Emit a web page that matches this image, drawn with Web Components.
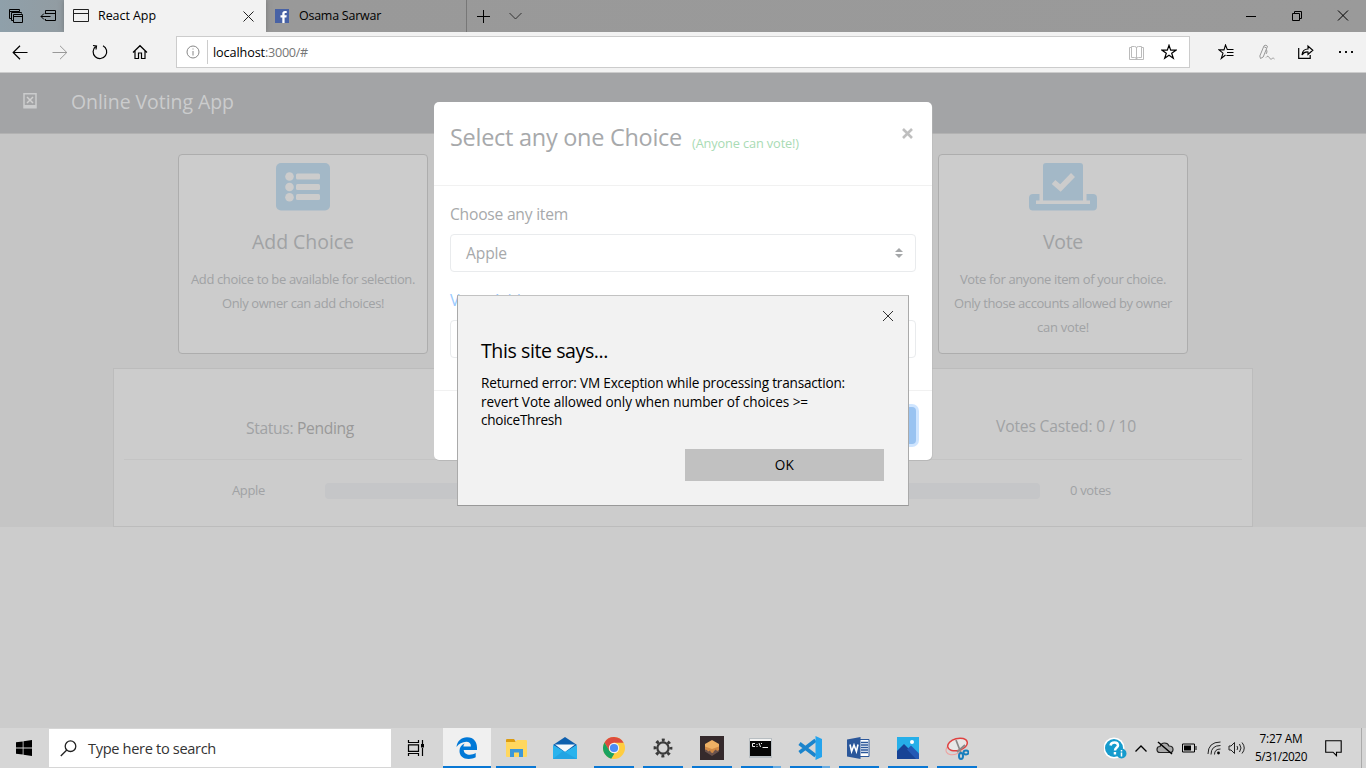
<!DOCTYPE html>
<html lang="en"><head><meta charset="utf-8"><title>React App</title>
<style>html,body{margin:0;height:768px;overflow:hidden;background:#ccc}body{font-family:"Open Sans","Noto Sans",sans-serif;color:#000}</style></head>
<body><desktop-screen></desktop-screen>
<script>
function define(name, css, html){
  const t=document.createElement('template');
  t.innerHTML='<style>*{box-sizing:border-box}svg{display:block;flex:none}'+css+'</style>'+html;
  customElements.define(name,class extends HTMLElement{
    constructor(){super();this.attachShadow({mode:'open'}).append(t.content.cloneNode(true));}
  });
}
define('desktop-screen',`:host{display:grid;grid-template-rows:32px 41px 655px 40px;width:1366px;height:768px}`,
`<title-bar></title-bar><tool-bar></tool-bar><web-page></web-page><task-bar></task-bar>`);

define('title-bar',`:host{display:flex;height:32px;background:linear-gradient(90deg,#8fa0aa 0,#929ca2 60px,#999 270px,#9a9a9a)}
.cell{width:32px;display:grid;place-items:center}.tab{display:flex;align-items:center;height:32px}
.on{width:202px;background:#f2f2f2;box-shadow:0 0 5px #5558;padding:0 12px 0 9px}.off{width:201px;border-right:1px solid #777;padding-left:9px}
.on ui-text{margin-left:9px}.on svg:last-child{margin-left:auto}.off ui-text{margin-left:10px}.win{width:46px}.sp{flex:1}`,
`<div class="cell"><svg width="14" height="14" fill="none" stroke="#000"><path d="M2.500 9.500h-2v-9h10v2M.5 2.500h10M4.500 11.500h-2v-8h10v1M4.500 5.500h9v8h-9zM4.500 7.500h9"/></svg></div>
<div class="cell"><svg width="18" height="14" fill="none" stroke="#000"><path d="M6.500 5v-3.500h10v10h-10V10M6.500 4.500h10M2 7.500h9.500M5 4.500l-3 3 3 3"/></svg></div>
<div class="tab on"><svg width="16" height="14" fill="none" stroke="#222"><path d="M.5.500h15v12H.5zM.5 4.500h15"/></svg><ui-text w="58" s="12.1">React App</ui-text><svg width="11" height="11" stroke="#222"><path d="M.5.500l10 10M10.500.500l-10 10"/></svg></div>
<div class="tab off"><svg width="14" height="14"><path fill="#4862a5" d="M0 0h14v14H0z"/><path fill="#fff" d="M7.300 14V8.500H5.500V6.200h1.800V4.500C7.300 2.700 8.300 1.900 10 1.900h1.700v2.200h-1.200c-.7 0-.9.300-.9.900v1.200h2.100l-.3 2.300H9.600V14z"/></svg><ui-text w="82" s="12.100">Osama Sarwar</ui-text></div>
<div class="cell"><svg width="14" height="14" stroke="#000"><path d="M7.500 1v13M1 7.500h13"/></svg></div>
<div class="cell"><svg width="14" height="8" fill="none" stroke="#333"><path d="M1.500 1l6 6 6-6"/></svg></div>
<div class="sp"></div>
<div class="cell win"><svg width="10" height="10" stroke="#000"><path d="M0 5.500h10"/></svg></div>
<div class="cell win"><svg width="10" height="10" fill="none" stroke="#000"><path d="M2.500 2V.500h7v7H8M.5 2.500h7v7h-7z"/></svg></div>
<div class="cell win"><svg width="12" height="12" stroke="#000"><path d="M1 .5l10 10M11 .5l-10 10"/></svg></div>`);

define('tool-bar',`:host{display:flex;height:41px;background:#f2f2f2;border-bottom:1px solid #ccc}
.c{width:40px;height:40px;display:grid;place-items:center}.bar{margin:4px 16px 4px 16px;width:1014px;height:32px;border:1px solid #ccc;background:#fff;display:flex;align-items:center;padding-left:9px}
.bar .c{width:33px;height:30px}.bar ui-text{margin-top:-1px}i{width:1px;height:24px;background:#ccc;margin:0 5px 0 7px}.g{color:#767676}.sp{flex:1}`,
`<div class="c"><svg width="16" height="15" fill="none" stroke="#000" stroke-width="1.200"><path d="M15.500 7.500H1M8 .8L1.200 7.500 8 14.200"/></svg></div>
<div class="c"><svg width="16" height="15" fill="none" stroke="#999"><path d="M.5 7.500H15M8 .8l6.800 6.700L8 14.200"/></svg></div>
<div class="c"><svg width="16" height="16" fill="none" stroke="#000" stroke-width="1.200"><path d="M3.600 2.500A6.800 6.800 0 1 0 11 1.700M1 1.500l3.500.5-.5 3.500"/></svg></div>
<div class="c"><svg width="16" height="16" fill="none" stroke="#000" stroke-width="1.200"><path d="M1 8.500l7-6.800 7 6.800M3 7v7.500h3.500V9h3v5.500H13V7"/></svg></div>
<div class="bar"><svg width="14" height="14" fill="none" stroke="#888"><circle cx="7" cy="7" r="6"/><path d="M7 6v4.500M7 3.500v1"/></svg><i></i><ui-text w="52" s="12.300">localhost</ui-text><ui-text class="g" w="43" s="12.300">:3000/#</ui-text><div class="sp"></div>
<div class="c"><svg width="16" height="15" fill="none" stroke="#bbb"><path d="M3.500 12.500v-11h3q2 0 2 1.500 0-1.500 2-1.500h3v11h-3q-2 0-2 1.500 0-1.500-2-1.500zM8.500 2v12M3 2.500H1.500v12h14v-12H14"/></svg></div>
<div class="c"><svg width="16" height="16" fill="none" stroke="#000" stroke-width="1.200"><path d="M8 1.300l1.700 4.900h5.200l-4.200 3.100 1.600 5-4.300-3.100-4.300 3.100 1.600-5L1.100 6.200h5.200z"/></svg></div><div style="width:4px"></div></div>
<div class="c"><svg width="16" height="16" fill="none" stroke="#000" stroke-width="1.100"><path d="M15.500 5.500H9.300L7.500 1 6 5.900H1l4 3.300-1.700 5.200L7.500 11M9 8.500h6.500M8.500 11.500h7"/></svg></div>
<div class="c"><svg width="17" height="17" fill="none" stroke="#999"><path d="M2.500 14.500L1.800 12 6 1.800q2-1.500 3.500.5L5.200 13zM6.300 3l2 .8M8 13.500c3-4 3.500 3 5.500 1.500s1.500-1 3 0M8.500 5.500L9 8l-1 2"/></svg></div>
<div class="c"><svg width="18" height="16" fill="none" stroke="#000" stroke-width="1.200"><path d="M1.700 4v10.400h11.500V11M5 11q.5-6 6-6V2l4.800 4.300L11 10.500V8q-4-.3-6 3z"/></svg></div>
<div class="c"><svg width="16" height="4" fill="#111"><path d="M1 1h2v2H1zM7 1h2v2H7zM13 1h2v2h-2z"/></svg></div>`);

define('web-page',`:host{display:block;position:relative;height:655px;background:#ccc;color:#a0a2a4;overflow:hidden}
header{height:61px;background:#a3a4a6;border-bottom:1px solid #b2b2b2;display:flex;align-items:center;padding-left:23px;color:#cbcccd}
header ui-text{margin-left:34px;margin-top:-2px}header svg{margin-top:-4px}
main{height:393px;background:#c5c5c5;padding:20px 113px 0}.cards{display:flex;justify-content:space-between;padding:0 65px}
.panel{margin-top:14px;height:159px;background:#ccc;border:1px solid #bcbcbc;padding:0 10px}
.top{height:91px;border-bottom:1px solid #c4c4c4;display:flex;justify-content:space-between;padding:47px 106px 0 122px}.top ui-text:last-child{margin-top:-2px}
.row{display:flex;align-items:center;height:61px;padding-left:108px}.row ui-text{margin-top:-2px}.bar{width:715px;height:16px;border-radius:4px;background:#c5c6c8;margin:0 30px 0 60px}
vote-modal{position:absolute;left:434px;top:29px}site-alert{position:absolute;left:457px;top:222px}`,
`<header><svg width="14" height="16"><path fill="#a3a4a6" stroke="#cbcccd" stroke-width="1.500" d="M1 .8h12v14H1z"/><path fill="#cbcccd" d="M1 12h12v3H1z"/><path d="M4 4l6 6M10 4l-6 6" stroke="#d0d0d0" stroke-width="1.500"/></svg><ui-text w="163" s="18.900" l="30">Online Voting App</ui-text></header>
<main><div class="cards">
<choice-card><svg slot="icon" width="54" height="48"><rect width="54" height="47.500" rx="5" fill="#a3b8c7"/><g fill="#ccc"><circle cx="13.500" cy="13.500" r="4.300"/><circle cx="13.500" cy="24" r="4.300"/><circle cx="13.500" cy="34.200" r="4.300"/><rect x="20" y="10.500" width="24" height="6" rx="1.500"/><rect x="20" y="21" width="24" height="6" rx="1.500"/><rect x="20" y="31" width="24" height="6" rx="1.500"/></g></svg>
<ui-text slot="title" w="102" s="18.900" l="24">Add Choice</ui-text><ui-text w="224" s="12.600" l="24">Add choice to be available for selection.</ui-text><ui-text w="162" s="12.600" l="24">Only owner can add choices!</ui-text></choice-card>
<choice-card><svg slot="icon" width="68" height="48"><g fill="#a3b8c7"><path d="M17 0h34q3 0 3 3v34.500H14V3q0-3 3-3z"/><path d="M4 31h6.500v6.500H7v3.500h54v-3.500h-3.500V31H64q4 0 4 4v8.500q0 4-4 4H4q-4 0-4-4V35q0-4 4-4z"/></g><path d="M24.500 19l7 6L44 12" fill="none" stroke="#ccc" stroke-width="5.500"/></svg>
<ui-text slot="title" w="40" s="18.900" l="24">Vote</ui-text><ui-text w="206" s="12.600" l="24">Vote for anyone item of your choice.</ui-text><ui-text w="218" s="12.600" l="24">Only those accounts allowed by owner</ui-text><ui-text w="52" s="12.600" l="24">can vote!</ui-text></choice-card></div>
<div class="panel"><div class="top"><ui-text w="108" s="15.200" l="24">Status: <span style="color:#999">Pending</span></ui-text><ui-text w="140" s="15.200" l="24">Votes Casted: 0 / 10</ui-text></div>
<div class="row"><ui-text w="33" s="12.600" l="20">Apple</ui-text><div class="bar"></div><ui-text w="41" s="12.600" l="20">0 votes</ui-text></div></div></main>
<vote-modal></vote-modal><site-alert></site-alert>`);

define('choice-card',`:host{width:250px;height:200px;border:1px solid #adadad;border-radius:4px;background:#ccc;display:flex;flex-direction:column;align-items:center;padding-top:8px;box-sizing:border-box}
.t{margin:19px 0 13px;height:24px}`,`<slot name="icon"></slot><div class="t"><slot name="title"></slot></div><slot></slot>`);

define('vote-modal',`:host{display:flex;flex-direction:column;box-sizing:border-box;width:498px;height:358px;background:#fff;border-radius:5px;box-shadow:.5px 1px 0 0 #b8b8b8;color:#a7a9ab}
.h{height:84px;border-bottom:1px solid #f1f1f1;display:flex;padding:19px 19px 0 16px}.g{color:#a9dbb4;margin:11px 0 0 10px}.h svg{margin:7px 0 0 auto}
.b{height:205px;border-bottom:1px solid #f1f1f1;padding:16px 16px 0}.f{border:1px solid #e9ebed;border-radius:4px;height:38px;display:flex;align-items:center;justify-content:space-between;padding:0 12px 0 15px;margin-top:8px}
.v{margin-top:16px;color:#99caff;display:block}.v ui-text{display:block}.foot{display:flex;justify-content:flex-end;padding:16px 16px 0}.btn{width:66px;height:37px;border-radius:4px;background:#99c3f1;box-shadow:0 0 0 3px #cfe5ff}`,
`<div class="h"><ui-text w="232" s="22.800" l="32">Select any one Choice</ui-text><ui-text class="g" w="107" s="12.400" l="22">(Anyone can vote!)</ui-text><svg width="11" height="11" stroke="#bfbfbf" stroke-width="2.600"><path d="M1 1l9 9M10 1l-9 9"/></svg></div>
<div class="b"><ui-text w="118" s="15.200" l="24">Choose any item</ui-text><div class="f"><ui-text w="41" s="15.200" l="24">Apple</ui-text><svg width="8" height="10" fill="#a5a7a9"><path d="M0 4l4-4 4 4zM0 6h8l-4 4z"/></svg></div>
<div class="v"><ui-text w="100" s="15.200" l="24">Voter Address</ui-text></div><div class="f"></div></div>
<div class="foot"><div class="btn"></div></div>`);

define('site-alert',`:host{display:flex;flex-direction:column;box-sizing:border-box;width:452px;height:211px;background:#f2f2f2;border:1px solid #aaa;border-top-color:#c2c2c2;border-bottom-color:#999;color:#000;padding:15px 24px 24px 23px}
.x{align-self:flex-end;margin-right:-10px}.t{margin:15px 0 9px 0;height:28px}.m{display:flex;flex-direction:column;align-items:flex-start;height:56px}
.ok{align-self:flex-end;margin-top:19px;width:199px;height:32px;background:#c1c1c1;display:grid;place-items:center;flex:none}`,
`<svg class="x" width="11" height="11" stroke="#333"><path d="M0 0l10 10M10 0l-10 10"/></svg><div class="t"><ui-text w="127" s="19" l="28">This site says...</ui-text></div>
<div class="m"><ui-text w="364" s="13.200" l="18.500">Returned error: VM Exception while processing transaction:</ui-text><ui-text w="327" s="13.200" l="18.500">revert Vote allowed only when number of choices &gt;=</ui-text><ui-text w="81" s="13.200" l="18.500">choiceThresh</ui-text></div>
<div class="ok"><ui-text w="19.500" s="13.200" l="20">OK</ui-text></div>`);

define('task-bar',`:host{display:flex;height:40px;background:#d6d6d6;box-sizing:border-box}
.s{width:49px;display:grid;place-items:center}.q{width:342px;height:38px;margin-top:1px;background:#fff;display:flex;align-items:center;padding-left:11px;color:#333;margin-right:2px}.q ui-text{margin:0 0 0 11px}
.tv{width:45px;margin-right:5px}.sp{flex:1}.tray{display:flex}.c{display:grid;place-items:center;width:24px}.time{display:flex;flex-direction:column;align-items:center;width:54px;margin-left:5.5px;padding-top:1px}
.end{width:5px;border-left:1px solid #aaa}`,
`<div class="s"><svg width="17" height="16" fill="#000"><path d="M0 2.300L6.700 1.400v6.200H0zM7.500 1.300L16 0v7.600H7.500zM0 8.400h6.700v6.200L0 13.700zM7.500 8.400H16V16l-8.500-1.300z"/></svg></div>
<div class="q"><svg width="17" height="17" fill="none" stroke="#222" stroke-width="1.300"><circle cx="10.500" cy="6.200" r="5.300"/><path d="M6.800 10L.8 16"/></svg><ui-text w="128" s="14.200" l="22">Type here to search</ui-text></div>
<div class="s tv"><svg width="17" height="16" fill="none" stroke="#000" stroke-width="1.200"><path d="M1.500 0v2.500h10V0M1.500 4.800h10v6.500h-10zM1.500 16v-2.500h10V16M15.500 0v4M15.500 8v8"/><path fill="#000" stroke="none" d="M14 4h3v3.500h-3z"/></svg></div>
<app-button active><svg width="22" height="22" viewBox="0 0 22 22"><path fill="#0078d7" d="M.5 10C1 4 5.500.2 11 .2c7 0 10 5 10 10.300V13H7.700c.1 3.200 3 4.800 6 4.800 2.200 0 4.300-.6 6-1.700v4.200c-2 1.100-4.500 1.600-7 1.600-5.700 0-9.200-3.200-9.200-8C3.500 10.500 5.300 7.700 8.600 6.400c-.8 1-1.100 2-1.200 3h7.500c0-3-1.600-4.600-4.600-4.600C6.500 4.800 2.700 7 .5 10z"/></svg></app-button>
<app-button><svg width="22" height="20"><path fill="#dc9c10" d="M1 2q0-1 1-1h7l2 3H1z"/><path fill="#ffd75e" d="M1 4l9 0 2-2h9q1 0 1 1v15q0 1-1 1H2q-1 0-1-1z"/><path fill="#3c98d9" d="M5 11h13v8h-4v-4.500H9V19H5z"/></svg></app-button>
<app-button none><svg width="24" height="22"><path fill="#0d5fae" d="M0 8L12 0l12 8-12 8z"/><path fill="#f5f8fb" d="M2 7.500h20L12 15z"/><path fill="#29b3ed" d="M0 8l12 7 12-7v14H0z"/><path fill="#1e96d9" d="M10 14l14 8H0z" opacity=".5"/></svg></app-button>
<app-button><svg width="22" height="22"><circle cx="11" cy="11" r="11" fill="#ffcd40"/><path fill="#dd4b3e" d="M1.500 5.500A11 11 0 0 1 20.600 5.800H11L6 13.500z"/><path fill="#1aa260" d="M1.500 5.500L6.500 14l5 2.500-3.300 5.200A11 11 0 0 1 1.500 5.500z"/><circle cx="11" cy="11" r="5.200" fill="#f4f4f4"/><circle cx="11" cy="11" r="4.100" fill="#4c8bf5"/></svg></app-button>
<app-button><svg width="20" height="20" fill="none" stroke="#3b3b3b"><circle cx="10" cy="10" r="5.600" stroke-width="2.200"/><circle cx="10" cy="10" r="7.900" stroke-width="3" stroke-dasharray="2.900 3.300" stroke-dashoffset="1.400"/></svg></app-button>
<app-button><svg width="24" height="24"><path fill="#352a2c" d="M0 0h24v24H0z"/><path fill="#6b524c" d="M5 12l7 3 7-3v3.500L12 20l-7-4.500z"/><path fill="#d28a45" d="M5 8h14v6l-2 1-1-1.500-2 1.500-1 2-2-.500-1-2-2 1-1-1.500-2-.500z"/><path fill="#eeb064" d="M12 4l7 4v2.500L12 13l-7-2.500V8z"/></svg></app-button>
<app-button multi><svg width="24" height="20"><path fill="#b8bec2" d="M0 0h23v20H0z"/><path fill="#f2f2f2" d="M1 1h21v2H1z"/><path fill="#050505" d="M1 3h21v15H1z"/><path fill="none" stroke="#eee" d="M6 5.500H3.500v3H6M8 6v1M8 8v1M10 5l1.500 4M12.500 5v1M13.500 9.500H19"/></svg></app-button>
<app-button multi><svg width="24" height="24"><path fill="none" stroke="#1b84cc" stroke-width="3.600" stroke-linejoin="round" d="M1.500 7.500l16 12.200M1.500 16.500l16-12.200"/><path fill="#25a4ed" d="M17.500 0L24 3v18l-6.500 3z"/></svg></app-button>
<app-button><svg width="24" height="22"><path fill="#fff" stroke="#2b579a" d="M10 2.500h12v17H10z"/><path stroke="#2b579a" stroke-width="1.300" d="M14 5.500h7M14 8h7M14 10.500h7M14 13h7M14 15.500h7"/><path fill="#2b579a" d="M0 2.500L13.500 0v22L0 19.500z"/><path fill="none" stroke="#fff" stroke-width="1.600" d="M3 7.500l1.600 7L7 8l2.400 6.500L11 7.500"/></svg></app-button>
<app-button><svg width="22" height="22"><path fill="#26afe9" d="M0 0h22v22H0z"/><circle cx="15" cy="5" r="2" fill="#fff"/><path fill="#174396" d="M0 14L7 7l15 15H0z"/><path fill="#2459b5" d="M10 12.500l4-4 8 8V22h-3z"/></svg></app-button>
<app-button><svg width="24" height="23" fill="none"><ellipse cx="10" cy="11" rx="9.500" ry="6" stroke="#efa09e" transform="rotate(-25 10 11)"/><ellipse cx="12.500" cy="7.500" rx="10" ry="6" fill="#e7e7e7" stroke="#df4140" stroke-width="1.500" transform="rotate(-15 12.500 7.500)"/><path stroke="#888" stroke-width="1.700" d="M11 3l5 13M20 8l-8 7"/><g stroke="#187ebd" stroke-width="2"><ellipse cx="16" cy="19" rx="2" ry="3"/><ellipse cx="21" cy="15.500" rx="2.500" ry="1.900"/></g></svg></app-button>
<div class="sp"></div><div class="tray">
<div class="c" style="width:27px"><svg width="24" height="22"><circle cx="10" cy="11" r="10.500" fill="#fff"/><circle cx="10" cy="11" r="9" fill="#159bcd"/><path fill="none" stroke="#fff" stroke-width="2.500" d="M6.500 8.500q.5-3 4-3t3.500 3c0 2-3 2.200-3 5M11 15v2.500"/><circle cx="17.500" cy="16.500" r="5" fill="#159bcd"/><path stroke="#fff" stroke-width="1.500" d="M17.500 15.500v4M17.500 13v1.500"/></svg></div>
<div class="c"><svg width="12" height="7" fill="none" stroke="#000" stroke-width="1.300"><path d="M.5 6.500L6 1l5.500 5.500"/></svg></div>
<div class="c"><svg width="18" height="14" fill="none" stroke="#222" stroke-width="1.200"><path fill="#aaa" d="M4 11.500q-3 0-3-3t3-3Q5 2 8.500 2t4.500 3q4 0 4 3.300t-3 3.200z"/><path stroke="#000" stroke-width="1.500" d="M2 1l14 12"/></svg></div>
<div class="c"><svg width="15" height="10" fill="none" stroke="#000"><path d="M.5 1h12v8H.5zM14 3v4"/><path fill="#000" stroke="none" d="M2 2.500h7v5H2z"/></svg></div>
<div class="c" style="width:25px"><svg width="14" height="14" fill="none" stroke="#222"><path d="M1 13Q1 1 13.500 1M4 13.500Q4 4.500 13.500 4.500M7.500 13.500Q7.500 8 13.500 8"/><circle cx="11.500" cy="12" r="1.400" fill="#000" stroke="none"/></svg></div>
<div class="c" style="width:22.500px"><svg width="18" height="14" fill="none" stroke="#222"><path d="M1 5h2l3.500-3.500v11L3 9H1zM9 5q1.500 2 0 4M11.500 3q3 4 0 8M14 1.500q4.500 5.500 0 11"/></svg></div>
<div class="time"><ui-text w="43" s="11.500" l="18">7:27 AM</ui-text><ui-text w="52" s="11.500" l="18">5/31/2020</ui-text></div>
<div class="c" style="width:53px;padding-right:3px"><svg width="17" height="17" fill="none" stroke="#000" stroke-width="1.100"><path d="M.7.700h15.500v11.500h-4.700v3.500L8 12.200H.7z"/></svg></div><div class="end"></div></div>`);

define('app-button',`:host{display:grid;grid-template-rows:38px 2px;place-items:center;width:40px;height:40px;margin-left:9px;position:relative}
:host([active]){width:48px;margin-left:0;margin-right:-4px;background:#f0f0f0}.u{width:100%;height:2px;background:#0a78d4}:host([none]) .u{visibility:hidden}:host([multi]) .u{background:linear-gradient(90deg,#0a78d4 32px,#68ace2 32px)}::slotted(svg){margin-top:2px}`,
`<slot></slot><div class="u"></div>`);

/* Text run: s = font size, l = line height, w = advance width of the whole run. */
customElements.define('ui-text',class extends HTMLElement{
  constructor(){super();this.attachShadow({mode:'open'}).innerHTML='<style>:host{display:inline-block;flex:none;white-space:nowrap;vertical-align:top}span{display:inline-block;vertical-align:top}</style><span><slot></slot></span>';}
  connectedCallback(){
    const run=this.shadowRoot.querySelector('span');
    this.style.fontSize=this.getAttribute('s')*1.03+'px';
    this.style.lineHeight=(this.getAttribute('l')||20)+'px';
    const w=+this.getAttribute('w'),n=this.textContent.length;
    this.style.letterSpacing=(w-run.getBoundingClientRect().width)/n+'px';
  }
});
</script></body></html>
